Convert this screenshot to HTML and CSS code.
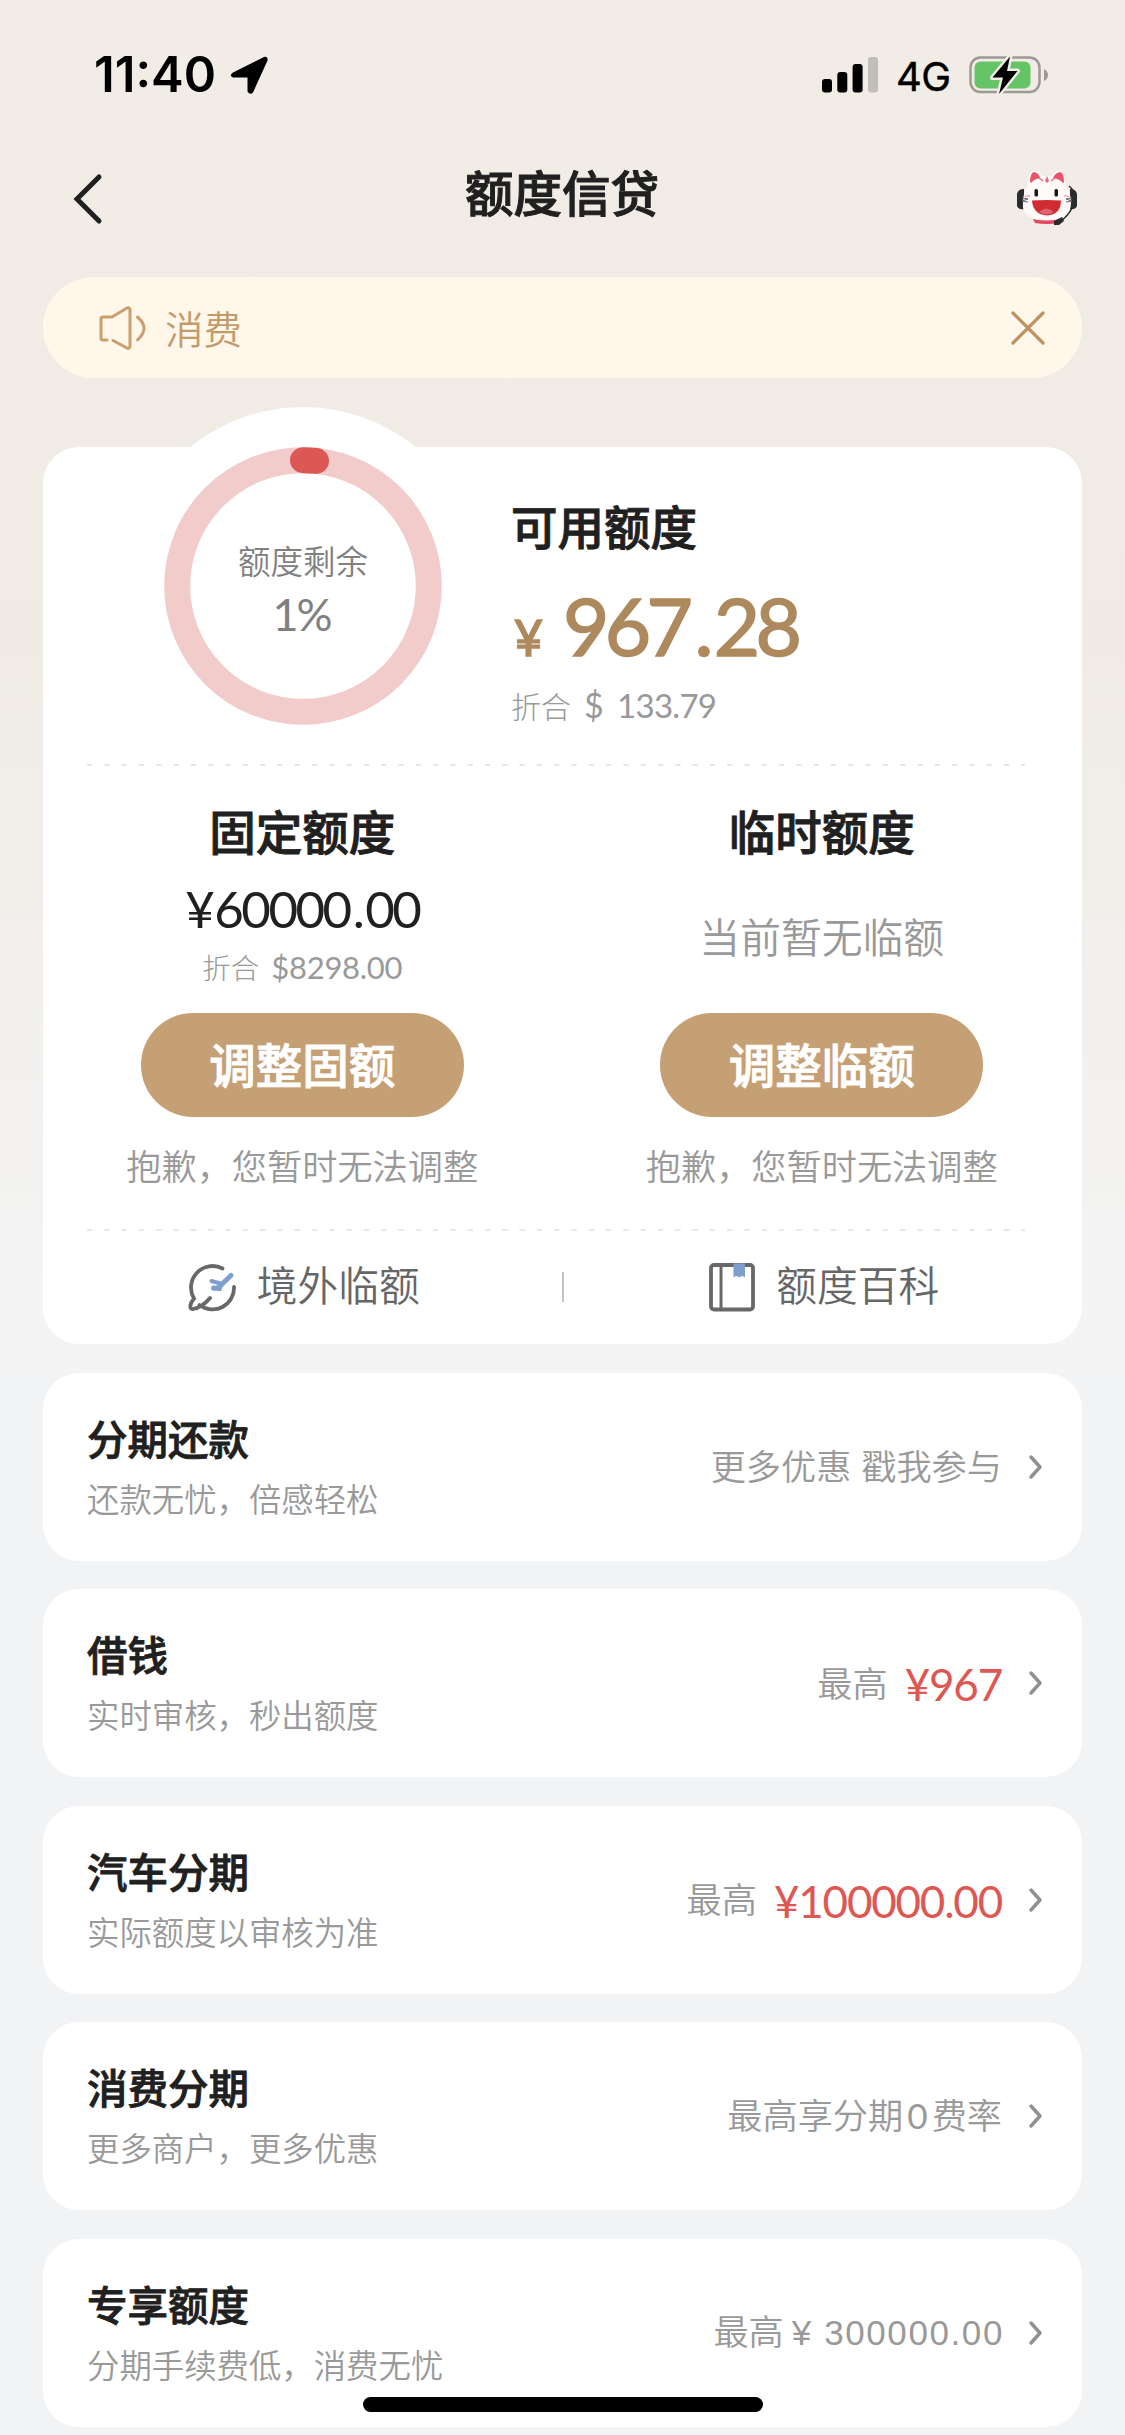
FILE: index.html
```html
<!DOCTYPE html>
<html lang="zh-CN">
<head>
<meta charset="utf-8">
<title>额度信贷</title>
<link rel="stylesheet" href="styles.css">
</head>
<body>
<div class="screen">
  <header class="status">
    <div class="status-left">
      <span class="clock">11:40</span>
      <svg class="location" width="38" height="38" viewBox="0 0 38 38"><path d="M3 16.500 34 1q4-1 3.500 3.500L23 36.500q-3 3-5.500-1V21.500H3q-4.500-2 0-5z"/></svg>
    </div>
    <div class="status-right">
      <svg width="56" height="36" viewBox="0 0 56 36"><rect x="0" y="22" width="10" height="13.500" rx="3"/><rect x="15.300" y="15" width="10" height="20.500" rx="3"/><rect x="30.600" y="7" width="10" height="28.500" rx="3"/><rect x="46" y="0" width="10" height="35.500" rx="3" fill="#c1beb9"/></svg>
      <span class="network">4G</span>
      <svg width="80" height="44" viewBox="0 0 80 44"><rect x="1.500" y="4.500" width="69" height="34.500" rx="10" fill="none" stroke="#9d9a96" stroke-width="2.500"/><path d="M75 16q4 2 4 6t-4 6z" fill="#9d9a96"/><rect x="5.500" y="8.500" width="56" height="27" rx="6" fill="#65c466"/><path d="M41 3.500 23.500 24.500H34L30 41 48.500 18H38z" fill="#000" stroke="#f1ede7" stroke-width="5" paint-order="stroke" stroke-linejoin="round"/></svg>
    </div>
  </header>

  <nav class="navbar">
    <svg class="back" width="30" height="52" viewBox="0 0 30 52"><path d="M26 4 4 26l22 22" fill="none" stroke="#202020" stroke-width="5" stroke-linecap="round"/></svg>
    <h1>额度信贷</h1>
    <svg class="mascot" width="62" height="56" viewBox="0 0 62 56">
      <path d="M1 24q1-5 7-5v20q-5 1-7-3z" fill="#2b2b2d"/><path d="M61 24q-1-5-7-5v20q5 1 7-3z" fill="#2b2b2d"/>
      <path d="M17 49q13 3 28 0l-2 4q-12 2-24 0z" fill="#e8445b"/>
      <path d="M12 15Q12 1 19 1q5 0 7 5h10q2-5 7-5 6 0 6 14 6 7 6 18 0 17-25 17T7 33q0-11 5-18z" fill="#fffafa"/>
      <path d="M14 12q0-9 4-10 5 1 6 6-6 1-9 5zM48 12q0-9-4-10-5 1-7 6 7 1 10 5z" fill="#ed5366"/>
      <path d="m23 8 4 3M39 8l-4 3" stroke="#e96a79" stroke-width="1.500"/><path d="M31 6l2 5-2 2-2-2z" fill="#e96a79"/>
      <rect x="18.500" y="19" width="3.500" height="7.500" rx="1.500" fill="#171717"/><rect x="38.500" y="19" width="3.500" height="7.500" rx="1.500" fill="#171717"/>
      <path d="M16 30.500q15-1 29 0 0 14-14 15-14-1-15-15z" fill="#cf2c31"/><path d="M23 42q7-7 15 0-8 5-15 0z" fill="#e0606f"/>
      <path d="m6 28 6 1-6 2 6 1M56 28l-6 1 6 2-6 1" fill="none" stroke="#666"/>
      <path d="M9 27q2-2 5-1M53 27q-2-2-5-1" fill="none" stroke="#f6aab4" stroke-width="1.500"/>
      <path d="M57 36q-4 9-12 15M53 16q5 4 5 9" fill="none" stroke="#2b2b2d" stroke-width="1.500"/><path d="m38 51 8-4 2 4-5 4h-5z" fill="#2b2b2d"/>
    </svg>
  </nav>

  <section class="notice">
    <svg width="48" height="44" viewBox="0 0 48 44" fill="none" stroke="#c99f6d" stroke-width="3" stroke-linecap="round" stroke-linejoin="round"><path d="M8 34H4q-2 0-2-2V13q0-2 2-2h9L28 2q3-1 3 2v36q0 3-3 2L14 34.500M38.500 11q13 11 0 23"/></svg>
    <span class="notice-text">消费</span>
    <svg class="close" width="34" height="34" viewBox="0 0 34 34"><path d="m2 2 30 30M32 2 2 32" fill="none" stroke="#bd9260" stroke-width="3.300" stroke-linecap="round"/></svg>
  </section>

  <main>
    <section class="limit-card">
      <div class="overview">
        <div class="gauge">
          <svg class="ring" width="278" height="278" viewBox="0 0 278 278">
            <circle cx="139" cy="139" r="179" fill="#fff"/>
            <circle cx="139" cy="139" r="125.800" fill="none" stroke="#f2cbcb" stroke-width="26"/>
            <path d="M139 13.200A125.800 125.800 0 0 1 152 13.900" fill="none" stroke="#dc5855" stroke-width="26" stroke-linecap="round"/>
          </svg>
          <div class="gauge-text"><span class="gauge-label">额度剩余</span><span class="gauge-value">1%</span></div>
        </div>
        <div class="available">
          <h2>可用额度</h2>
          <p class="amount"><span class="yen">¥</span><span class="figure">967<span class="dot">.</span>28</span></p>
          <p class="converted"><span>折合</span><span class="usd">$</span><span class="usd-num">133.79</span></p>
        </div>
      </div>
      <svg class="dashes" width="938" height="2" viewBox="0 0 938 2"><path d="M0 1h938" stroke="#e6e6e6" stroke-width="2" stroke-dasharray="5.300 12"/></svg>
      <div class="limits">
        <div class="limit">
          <h2>固定额度</h2>
          <p class="fixed-amount"><span class="cny">¥</span><span>60000<span class="dot">.</span>00</span></p>
          <p class="fixed-usd"><span>折合</span><span class="num">$8298.00</span></p>
          <button class="adjust">调整固额</button>
          <p class="hint">抱歉，您暂时无法调整</p>
        </div>
        <div class="limit">
          <h2>临时额度</h2>
          <p class="none">当前暂无临额</p>
          <button class="adjust">调整临额</button>
          <p class="hint">抱歉，您暂时无法调整</p>
        </div>
      </div>
      <svg class="dashes" width="938" height="2" viewBox="0 0 938 2"><path d="M0 1h938" stroke="#e6e6e6" stroke-width="2" stroke-dasharray="5.300 12"/></svg>
      <div class="links">
        <a class="link">
          <svg width="48" height="48" viewBox="0 0 48 48" fill="none" stroke="#686868" stroke-width="3.800" stroke-linecap="round"><path d="M34.500 5.500A21.500 21.500 0 0 0 6 35.500C1.500 41 1 46.500 5 46q9-1.500 17-11M11.500 42A21.500 21.500 0 0 0 46 24"/><g stroke="#7e9fcd" stroke-linejoin="round"><path d="M43 12.500 32 23q-3 3-6.500 2" stroke-width="5"/><path d="m23.500 18 9 2.500" stroke-width="4"/><path d="m35 20-2.500 7.500-5-1z" fill="#7e9fcd" stroke-width="1.500"/></g></svg>
          <span>境外临额</span>
        </a>
        <i class="divider"></i>
        <a class="link">
          <svg width="46" height="48" viewBox="0 0 46 48"><rect x="2" y="2" width="42" height="44.500" rx="3" fill="none" stroke="#686868" stroke-width="3.800"/><path d="M12 2v44" stroke="#686868" stroke-width="3"/><path d="M24.500.5H36v14q-3-3-5.750 0-3-3-5.750 0z" fill="#7e9fcd"/></svg>
          <span>额度百科</span>
        </a>
      </div>
    </section>

    <section class="row">
      <div class="row-info"><h3>分期还款</h3><p>还款无忧，倍感轻松</p></div>
      <div class="row-side"><span>更多优惠 戳我参与</span></div>
      <svg class="chevron" width="16" height="26" viewBox="0 0 16 26"><path d="m3 3 9 10-9 10"/></svg>
    </section>
    <section class="row">
      <div class="row-info"><h3>借钱</h3><p>实时审核，秒出额度</p></div>
      <div class="row-side"><span>最高</span><span class="red">¥967</span></div>
      <svg class="chevron" width="16" height="26" viewBox="0 0 16 26"><path d="m3 3 9 10-9 10"/></svg>
    </section>
    <section class="row">
      <div class="row-info"><h3>汽车分期</h3><p>实际额度以审核为准</p></div>
      <div class="row-side"><span>最高</span><span class="red">¥100000.00</span></div>
      <svg class="chevron" width="16" height="26" viewBox="0 0 16 26"><path d="m3 3 9 10-9 10"/></svg>
    </section>
    <section class="row">
      <div class="row-info"><h3>消费分期</h3><p>更多商户，更多优惠</p></div>
      <div class="row-side"><span>最高享分期<span class="zero">0</span>费率</span></div>
      <svg class="chevron" width="16" height="26" viewBox="0 0 16 26"><path d="m3 3 9 10-9 10"/></svg>
    </section>
    <section class="row">
      <div class="row-info"><h3>专享额度</h3><p>分期手续费低，消费无忧</p></div>
      <div class="row-side"><span>最高<span class="plain">¥ 300000.00</span></span></div>
      <svg class="chevron" width="16" height="26" viewBox="0 0 16 26"><path d="m3 3 9 10-9 10"/></svg>
    </section>
  </main>
  <div class="home-bar"></div>
</div>
</body>
</html>
```
FILE: styles.css
```css
* { box-sizing: border-box; margin: 0; padding: 0; }
body { background: #f2f3f5; }
svg { display: block; flex: none; overflow: visible; }
span { white-space: nowrap; }

.screen {
  position: relative;
  width: 1125px;
  height: 2435px;
  overflow: hidden;
  font-family: "Noto Sans CJK SC", sans-serif;
  color: #202020;
  background: linear-gradient(#f1ece6 0, #f0ebe5 650px, #f4f4f4 1300px, #f4f4f4 1373px, #f2f3f5 1373px);
}

.status {
  height: 150px;
  padding: 52px 76px 0 94px;
  display: flex;
  justify-content: space-between;
  align-items: flex-start;
  font-family: Inter, sans-serif;
  color: #000;
}
.status-left, .status-right { display: flex; align-items: center; height: 46px; }
.clock { font-size: 49px; font-weight: 600; line-height: 46px; letter-spacing: 0; width: 136px; }
.status-right svg:first-child { margin-top: -1px; }
.network { font-size: 40px; font-weight: 400; -webkit-text-stroke: 0.4px #000; line-height: 46px; margin: 3px 0 0 18px; width: 73px; letter-spacing: -0.5px; }

.navbar {
  height: 127px;
  padding: 0 47px 0 73px;
  display: grid;
  grid-template-columns: 1fr auto 1fr;
  align-items: start;
}
.back { margin-top: 23px; }
h1 { font-size: 48.500px; font-weight: 500; -webkit-text-stroke: 1px #202020; line-height: 50px; margin-top: 16px; margin-right: 27px; }
.mascot { margin-top: 20px; justify-self: end; }

.notice {
  height: 101px;
  margin: 0 43px;
  padding: 0 37px 0 56px;
  display: flex;
  align-items: center;
  border-radius: 51px;
  background: #fff7e9;
  color: #c39b6b;
}
.notice-text { font-size: 38.500px; line-height: 40px; margin: -2px auto 0 18px; font-weight: 350; }

main { padding: 0 43px; margin-top: 69px; display: flex; flex-direction: column; gap: 28.500px; }

.limit-card { height: 897px; border-radius: 36px; background: #fff; }
.overview { height: 317px; display: flex; padding-left: 121px; }
.gauge { display: grid; width: 278px; height: 278px; }
.gauge > * { grid-area: 1 / 1; }
.gauge-text { display: flex; flex-direction: column; align-items: center; padding-top: 96px; color: #808080; z-index: 1; }
.gauge-label { font-size: 32.500px; line-height: 34px; font-weight: 350; }
.gauge-value { font: 400 45px/46px Lato, sans-serif; letter-spacing: -2px; margin: 14px 3px 0 0; }

.available { margin-left: 69px; padding-top: 55px; }
h2 { font-size: 46.500px; line-height: 46px; font-weight: 500; -webkit-text-stroke: 0.9px #202020; }
.amount { display: flex; align-items: baseline; height: 80px; margin-top: 37px; line-height: 80px; color: #ad895d; font-family: Lato, sans-serif; -webkit-text-stroke: 1.600px #ad895d; }
.yen { font-size: 50px; width: 52px; padding-left: 3px; letter-spacing: -2px; }
.figure { font-size: 80px; letter-spacing: -4.600px; }
.figure .dot { margin: 0 5px 0 6px; }
.converted { display: flex; align-items: baseline; height: 32px; margin-top: 24px; line-height: 32px; font-size: 30px; color: #999; font-weight: 300; }
.usd { font: 400 34px/32px Lato, sans-serif; width: 33px; margin-left: 13px; }
.usd-num { font: 400 33px/32px Lato, sans-serif; letter-spacing: -0.700px; }

.dashes { margin-left: 44px; }
.limits { display: grid; grid-template-columns: 1fr 1fr; height: 463px; text-align: center; }
.limit { display: flex; flex-direction: column; align-items: center; padding: 41px 1px 0 0; }
.fixed-amount { display: flex; align-items: baseline; font: 400 51px/48px Lato, sans-serif; height: 48px; margin-top: 32px; letter-spacing: -2.500px; }
.fixed-amount .dot { margin: 0 3px; }
.cny { margin-right: 2px; }
.fixed-usd { display: flex; align-items: baseline; height: 32px; margin-top: 18px; font-size: 28.500px; line-height: 32px; color: #999; font-weight: 300; }
.num { font: 400 31px/32px Lato, sans-serif; margin-left: 12px; letter-spacing: -0.300px; }
.none { font-size: 40.800px; line-height: 42px; margin: 62px 0 0; height: 68px; color: #999; font-weight: 350; }
.adjust {
  width: 323px;
  height: 104px;
  margin-top: 30px;
  padding-bottom: 5px;
  border: 0;
  border-radius: 52px;
  background: #c6a075;
  color: #fff;
  font: 500 46.500px/46px "Noto Sans CJK SC", sans-serif;
  -webkit-text-stroke: 0.900px #fff;
}
.hint { font-size: 35.200px; line-height: 36px; margin-top: 30px; color: #999; font-weight: 350; }

.links { display: grid; grid-template-columns: 1fr 2px 1fr; align-items: center; height: 111px; }
.link { display: flex; align-items: center; justify-content: center; gap: 21px; padding-left: 3px; color: #666; font-size: 40.700px; line-height: 42px; font-weight: 350; }
.link span { margin-top: -5px; }
.divider { height: 30px; background: #c4c4c4; }

.row { height: 188px; border-radius: 36px; background: #fff; display: flex; align-items: center; padding: 0 38px 0 44px; }
.row-info { flex: 1; margin-top: -2px; }
h3 { font-size: 40.500px; line-height: 40px; font-weight: 500; -webkit-text-stroke: 0.800px #202020; }
.row-info p { font-size: 32.400px; line-height: 32px; margin-top: 24px; color: #999; font-weight: 350; }
.row-side { display: flex; align-items: center; color: #999; font-size: 35.200px; line-height: 40px; margin: -3px 26px 0 0; font-weight: 350; word-spacing: 2px; }
.red { font: 400 44px/40px Lato, sans-serif; color: #de5752; margin: 5px 0 0 17px; letter-spacing: -1.200px; }
.zero { font-family: Lato, sans-serif; font-weight: 400; margin: 0 4px; }
.plain { font: 400 35px/40px "Liberation Sans", sans-serif; letter-spacing: 1.600px; word-spacing: 0; margin: 0 -2px 0 8px; }
.chevron path { fill: none; stroke: #919191; stroke-width: 3.500; stroke-linecap: round; stroke-linejoin: round; }

.home-bar { position: absolute; left: 363px; top: 2397px; width: 400px; height: 15px; border-radius: 8px; background: #000; }
```
